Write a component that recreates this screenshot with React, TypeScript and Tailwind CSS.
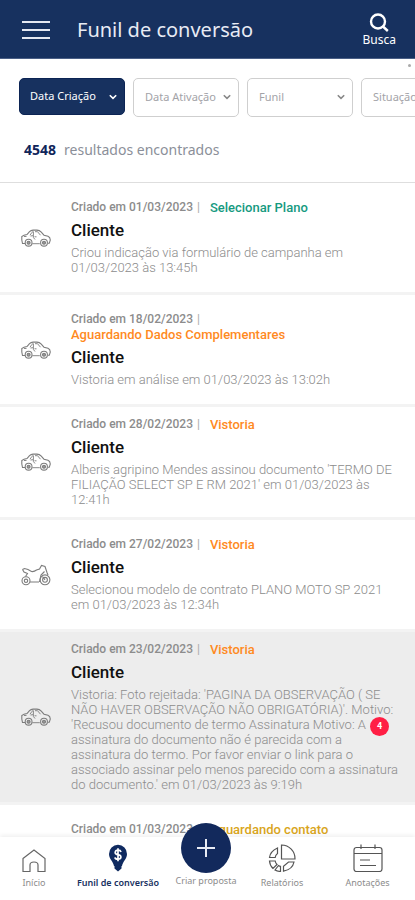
import type { ReactNode } from "react";

type Vehicle = "car" | "moto";

interface LeadSummary {
  date: string;
  status: string;
  statusColor: string;
}

interface Lead extends LeadSummary {
  description: string;
  vehicle: Vehicle;
  highlighted?: boolean;
  badge?: number;
}

const leads: Lead[] = [
  {
    date: "01/03/2023",
    status: "Selecionar Plano",
    statusColor: "text-[#159a80]",
    description: "Criou indicação via formulário de campanha em 01/03/2023 às 13:45h",
    vehicle: "car",
  },
  {
    date: "18/02/2023",
    status: "Aguardando Dados Complementares",
    statusColor: "text-[#ff8a1e]",
    description: "Vistoria em análise em 01/03/2023 às 13:02h",
    vehicle: "car",
  },
  {
    date: "28/02/2023",
    status: "Vistoria",
    statusColor: "text-[#ff8a1e]",
    description:
      "Alberis agripino Mendes assinou documento 'TERMO DE FILIAÇÃO SELECT SP E RM 2021' em 01/03/2023 às 12:41h",
    vehicle: "car",
  },
  {
    date: "27/02/2023",
    status: "Vistoria",
    statusColor: "text-[#ff8a1e]",
    description: "Selecionou modelo de contrato PLANO MOTO SP 2021 em 01/03/2023 às 12:34h",
    vehicle: "moto",
  },
  {
    date: "23/02/2023",
    status: "Vistoria",
    statusColor: "text-[#ff8a1e]",
    description:
      "Vistoria: Foto rejeitada: 'PAGINA DA OBSERVAÇÃO ( SE NÃO HAVER OBSERVAÇÃO NÃO OBRIGATÓRIA)'. Motivo: 'Recusou documento de termo Assinatura Motivo: A assinatura do documento não é parecida com a assinatura do termo. Por favor enviar o link para o associado assinar pelo menos parecido com a assinatura do documento.' em 01/03/2023 às 9:19h",
    vehicle: "car",
    highlighted: true,
    badge: 4,
  },
];

const nextLead: LeadSummary = {
  date: "01/03/2023",
  status: "Aguardando contato",
  statusColor: "text-[#d9a520]",
};

function CarIcon() {
  return (
    <svg width="30" height="18" viewBox="0 0 30 18" fill="none" stroke="#7c7c7c" strokeWidth="1.100" aria-hidden="true">
      <path d="M4 14.500H1.500L.8 11V7.500L3 6.200 6 5.600 8.500 2.600Q10 1.200 12 1.100H16Q18.500 1.200 20 2.800L23 6.200 27 7.300Q29.200 8.300 29.300 11L28.300 14.300H27" />
      <path d="M11.300 14.700H18.800M9 6.200 11 3.300Q11.500 2.700 12.400 2.700V6.600L9.500 7M14 2.700H16.500L19.500 6.200M12.400 6.600V8.500L14 10.500M13.500 7.800H15.500M3 7.500H5.500" strokeWidth="0.900" />
      <circle cx="7.600" cy="13.700" r="3.400" />
      <circle cx="7.600" cy="13.700" r="1.500" fill="#999" />
      <circle cx="23" cy="13.700" r="3.400" />
      <circle cx="23" cy="13.700" r="1.500" fill="#999" />
    </svg>
  );
}

function MotoIcon() {
  return (
    <svg width="30" height="22" viewBox="0 0 30 22" fill="none" stroke="#7c7c7c" strokeWidth="1.100" aria-hidden="true">
      <path d="M1.500 5.500 3.500 4.500 7 5.500 10.500 7.500Q13 8 15.500 6L18.500 5 20.500 1.500 24 2.500 26 8.500 27 11M9 18H18" />
      <path d="M1.500 5.500 3 8 6.500 9.500 4.500 12.500M23.500 7.500 20 11 18.500 18" />
      <circle cx="5" cy="16.800" r="4" />
      <circle cx="5" cy="16.800" r="1.700" />
      <circle cx="24" cy="15.800" r="4.900" />
      <circle cx="24" cy="15.800" r="2.400" />
      <path d="M21.500 12.500 24 15.800" />
    </svg>
  );
}

function Chevron({ className }: { className: string }) {
  return (
    <svg
      width="8"
      height="6"
      viewBox="0 0 8 6"
      fill="none"
      stroke="currentColor"
      strokeWidth="1.600"
      className={`pointer-events-none absolute top-4 right-2 ${className}`}
      aria-hidden="true"
    >
      <path d="M.8 1.200 4 4.400 7.200 1.200" />
    </svg>
  );
}

function Filter({ label, active }: { label: string; active?: boolean }) {
  return (
    <div className="relative w-[106px] shrink-0">
      <select
        aria-label={label}
        className={`block w-full appearance-none rounded-[5px] border text-[11px] ${
          active
            ? "h-[37px] border-[#0c2454] bg-[#17315f] pl-[10px] text-white"
            : "h-[39px] border-[#cfcfcf] bg-white pl-[11px] text-[#a3a3a8]"
        }`}
      >
        <option>{label}</option>
      </select>
      <Chevron className={active ? "text-white" : "text-[#888]"} />
    </div>
  );
}

function LeadMeta({ lead }: { lead: LeadSummary }) {
  return (
    <p className="text-[12px] leading-[15px] font-medium text-[#8c8c8c]">
      Criado em {lead.date}
      <span className="mr-[7px] ml-1 font-normal text-[#aaa]">|</span>{" "}
      <span className={`inline-block align-top text-[13px] leading-[15px] font-medium ${lead.statusColor}`}>
        {lead.status}
      </span>
    </p>
  );
}

function LeadRow({ lead }: { lead: Lead }) {
  return (
    <li
      className={`relative flex min-h-[112px] items-center border-b-[3px] border-[#f3f3f3] py-[10px] pr-4 pl-[21px] ${
        lead.highlighted ? "bg-[#ededed]" : "bg-white"
      }`}
    >
      <div className="w-[50px] shrink-0">{lead.vehicle === "car" ? <CarIcon /> : <MotoIcon />}</div>
      <div className="min-w-0 flex-1">
        <LeadMeta lead={lead} />
        <h2 className="text-[17px] leading-[30px] font-medium text-[#111]">Cliente</h2>
        <p className="text-[13px] leading-[15px] font-light text-[#8c8c8c]">{lead.description}</p>
      </div>
      {lead.badge !== undefined && (
        <span className="absolute top-[85px] right-[26px] flex size-[19px] items-center justify-center rounded-full bg-[#ff1f44] text-[9px] font-bold text-white">
          {lead.badge}
        </span>
      )}
    </li>
  );
}

function NavLink({ label, active, children }: { label: string; active?: boolean; children: ReactNode }) {
  return (
    <a
      href="#"
      className={`flex flex-col items-center pt-[7px] text-[9px] leading-[15px] whitespace-nowrap ${
        active ? "font-semibold text-[#17315f]" : "text-[#8c8c8c]"
      }`}
    >
      <span className="flex h-[31px] items-start justify-center">{children}</span>
      {label}
    </a>
  );
}

export default function App() {
  return (
    <div className="flex h-screen flex-col overflow-hidden bg-white font-['Noto_Sans','Open_Sans',sans-serif]">
      <header className="flex h-[59px] shrink-0 items-center border-b border-[#4a5f86] bg-[#17315f] pt-[2px] pr-[19px] pl-[22px] text-white">
        <button type="button" aria-label="Menu" className="flex w-7 flex-col gap-[6px]">
          <span className="h-[2px] bg-[#e6e9f2]" />
          <span className="h-[2px] bg-[#e6e9f2]" />
          <span className="h-[2px] bg-[#e6e9f2]" />
        </button>
        <h1 className="ml-[27px] flex-1 text-[20px] text-[#e8ebf4]">Funil de conversão</h1>
        <button type="button" className="flex flex-col items-center text-[12px] leading-[16px]">
          <svg width="20" height="19" viewBox="0 0 20 19" fill="none" stroke="white" strokeWidth="2.400" aria-hidden="true">
            <circle cx="9" cy="8.500" r="7" />
            <path d="M14 13.500 18.800 18" />
          </svg>
          Busca
        </button>
      </header>

      <section className="relative shrink-0 border-b border-[#dedede]">
        <span className="absolute top-[5px] right-1 size-[3px] rounded-full bg-[#aaa]" />
        <div className="flex h-[58px] items-start gap-2 overflow-hidden pt-[19px] pl-[19px]">
          <Filter label="Data Criação" active />
          <Filter label="Data Ativação" />
          <Filter label="Funil" />
          <Filter label="Situação" />
        </div>
        <p className="flex h-[65px] items-center gap-2 pl-6 text-[14px] text-[#8b8f99]">
          <strong className="font-bold text-[#10255a]">4548</strong>
          <span>resultados encontrados</span>
        </p>
      </section>

      <ul className="min-h-0 flex-1 overflow-y-auto font-[Roboto,sans-serif] [scrollbar-width:none]">
        {leads.map((lead) => (
          <LeadRow key={lead.date} lead={lead} />
        ))}
        <li className="pt-[17px] pl-[71px]">
          <LeadMeta lead={nextLead} />
        </li>
      </ul>

      <nav className="relative grid h-[63px] shrink-0 grid-cols-[68fr_100fr_76fr_76fr_95fr] bg-white shadow-[0_-2px_4px_rgba(0,0,0,0.06)]">
        <NavLink label="Início">
          <svg width="24" height="24" viewBox="0 0 24 24" fill="none" stroke="#666" strokeWidth="1.200" className="mt-[5px]" aria-hidden="true">
            <path d="M1 9.500 12 1 23 9.500V22.500H16V16Q16 13 12 13T8 16V22.500H1Z" />
          </svg>
        </NavLink>
        <NavLink label="Funil de conversão" active>
          <svg width="20" height="28" viewBox="0 0 20 28" aria-hidden="true">
            <path d="M10 .8A9 9 0 0 0 1 10C1 15 5 17 6 22H14C15 17 19 15 19 10A9 9 0 0 0 10 .8ZM6.500 22H13.500V24.500L10 27.500 6.500 24.500Z" fill="#0f2a60" />
            <path d="M13 8Q12.500 6.200 10 6.200T7.200 8.400Q7.200 10.200 10 10.600T12.900 13Q12.900 15.200 10 15.200T7 13.400M10 4.200V17.200" fill="none" stroke="white" strokeWidth="1.700" />
          </svg>
        </NavLink>
        <a href="#" className="-mt-[14px] flex flex-col items-center text-[9px] leading-[15px] whitespace-nowrap text-[#8c8c8c]">
          <span className="flex size-[50px] items-center justify-center rounded-full bg-[#12295c]">
            <svg width="20" height="20" viewBox="0 0 20 20" stroke="#e8ebf4" strokeWidth="2" aria-hidden="true">
              <path d="M10 1V19M1 10H19" />
            </svg>
          </span>
          Criar proposta
        </a>
        <NavLink label="Relatórios">
          <svg width="28" height="28" viewBox="0 0 28 28" fill="none" stroke="#555" strokeWidth="1.200" aria-hidden="true">
            <path d="M13.500 1A13.500 13.500 0 0 1 27 15H13.500Z" />
            <path d="M9.500 4V9.500Q7.500 11 7.200 13.500H1.500Q2 7.500 9.500 4ZM1.500 17H7.200Q7.500 19.200 9 20.500L5 24.500Q1.800 21.500 1.500 17ZM10.500 21.500Q11.500 22.300 12.500 22.300V27.500Q9.500 27.400 7 26ZM15.500 27.200V22.200L20.500 18H26Q24.500 25.500 15.500 27.200Z" />
          </svg>
        </NavLink>
        <NavLink label="Anotações">
          <svg width="30" height="28" viewBox="0 0 30 28" fill="none" stroke="#555" strokeWidth="1.200" aria-hidden="true">
            <rect x="1" y="3.500" width="28" height="24" rx="2.500" />
            <path d="M1 9.500H29M8 .5V5M22 .5V5M7 16H17M7 21.500H23" />
          </svg>
        </NavLink>
      </nav>
    </div>
  );
}
